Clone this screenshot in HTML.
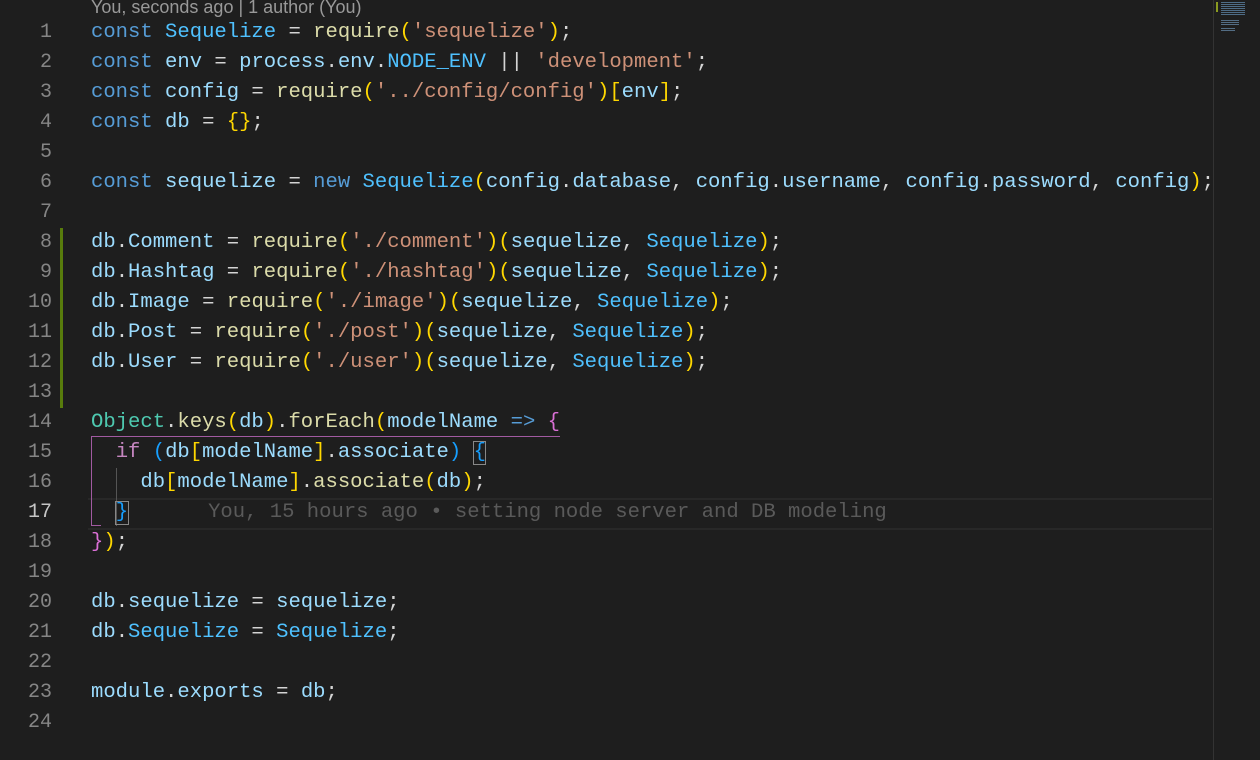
<!DOCTYPE html>
<html><head><meta charset="utf-8"><style>
body{margin:0;width:1260px;height:760px;background:#1e1e1e;overflow:hidden;position:relative;font-family:"Liberation Mono",monospace}
.lens{position:absolute;left:91px;top:-3px;font:18px "Liberation Sans",sans-serif;color:#999}
.ln{position:absolute;left:0;width:52px;text-align:right;font-size:20px;color:#858585;height:30px;line-height:30px}
.l{position:absolute;left:91px;font-size:20.57px;height:30px;line-height:30px;white-space:pre;color:#d4d4d4}
.k{color:#569cd6}.v{color:#9cdcfe}.c{color:#4fc1ff}.f{color:#dcdcaa}.s{color:#ce9178}.y{color:#ffd700}.p{color:#da70d6}.b{color:#179fff}.t{color:#4ec9b0}.i{color:#c586c0}.g{color:#5a5a5a}
</style></head><body>
<div class="lens">You, seconds ago | 1 author (You)</div>
<div style="position:absolute;left:60px;top:228px;width:3px;height:180px;background:#587c0c"></div>
<div style="position:absolute;left:88px;top:498px;width:1124px;height:28px;border-top:2px solid #282828;border-bottom:2px solid #282828"></div>
<div style="position:absolute;left:91px;top:436px;width:469px;height:1px;background:#a15aa1"></div>
<div style="position:absolute;left:91px;top:436px;width:1px;height:90px;background:#a15aa1"></div>
<div style="position:absolute;left:91px;top:525px;width:10px;height:1px;background:#a15aa1"></div>
<div style="position:absolute;left:116px;top:468px;width:1px;height:58px;background:#555"></div>
<div style="position:absolute;left:473px;top:441px;width:13px;height:24px;border:1px solid #888;box-sizing:border-box"></div>
<div style="position:absolute;left:115px;top:501px;width:14px;height:24px;border:1px solid #888;box-sizing:border-box"></div>
<div style="position:absolute;left:1213px;top:0;width:1px;height:760px;background:#333"></div>
<div style="position:absolute;left:1216px;top:2px;width:2px;height:10px;background:#8a9a20"></div>
<div style="position:absolute;left:1221px;top:2px;width:24px;height:14px;background:repeating-linear-gradient(#5a7fa0 0 1px,transparent 1px 2px);opacity:.8"></div>
<div style="position:absolute;left:1221px;top:20px;width:18px;height:6px;background:repeating-linear-gradient(#6a8fb0 0 1px,transparent 1px 2px);opacity:.7"></div>
<div style="position:absolute;left:1221px;top:28px;width:14px;height:4px;background:repeating-linear-gradient(#6a8fb0 0 1px,transparent 1px 2px);opacity:.7"></div>

<div class="ln" style="top:18px">1</div><div class="ln" style="top:48px">2</div><div class="ln" style="top:78px">3</div><div class="ln" style="top:108px">4</div><div class="ln" style="top:138px">5</div><div class="ln" style="top:168px">6</div><div class="ln" style="top:198px">7</div><div class="ln" style="top:228px">8</div><div class="ln" style="top:258px">9</div><div class="ln" style="top:288px">10</div><div class="ln" style="top:318px">11</div><div class="ln" style="top:348px">12</div><div class="ln" style="top:378px">13</div><div class="ln" style="top:408px">14</div><div class="ln" style="top:438px">15</div><div class="ln" style="top:468px">16</div><div class="ln" style="top:498px;color:#c6c6c6">17</div><div class="ln" style="top:528px">18</div><div class="ln" style="top:558px">19</div><div class="ln" style="top:588px">20</div><div class="ln" style="top:618px">21</div><div class="ln" style="top:648px">22</div><div class="ln" style="top:678px">23</div><div class="ln" style="top:708px">24</div>

<div class="l" style="top:18px"><span class="k">const</span> <span class="c">Sequelize</span> = <span class="f">require</span><span class="y">(</span><span class="s">'sequelize'</span><span class="y">)</span>;</div>
<div class="l" style="top:48px"><span class="k">const</span> <span class="v">env</span> = <span class="v">process</span>.<span class="v">env</span>.<span class="c">NODE_ENV</span> || <span class="s">'development'</span>;</div>
<div class="l" style="top:78px"><span class="k">const</span> <span class="v">config</span> = <span class="f">require</span><span class="y">(</span><span class="s">'../config/config'</span><span class="y">)[</span><span class="v">env</span><span class="y">]</span>;</div>
<div class="l" style="top:108px"><span class="k">const</span> <span class="v">db</span> = <span class="y">{}</span>;</div>
<div class="l" style="top:168px"><span class="k">const</span> <span class="v">sequelize</span> = <span class="k">new</span> <span class="c">Sequelize</span><span class="y">(</span><span class="v">config</span>.<span class="v">database</span>, <span class="v">config</span>.<span class="v">username</span>, <span class="v">config</span>.<span class="v">password</span>, <span class="v">config</span><span class="y">)</span>;</div>
<div class="l" style="top:228px"><span class="v">db</span>.<span class="v">Comment</span> = <span class="f">require</span><span class="y">(</span><span class="s">'./comment'</span><span class="y">)(</span><span class="v">sequelize</span>, <span class="c">Sequelize</span><span class="y">)</span>;</div>
<div class="l" style="top:258px"><span class="v">db</span>.<span class="v">Hashtag</span> = <span class="f">require</span><span class="y">(</span><span class="s">'./hashtag'</span><span class="y">)(</span><span class="v">sequelize</span>, <span class="c">Sequelize</span><span class="y">)</span>;</div>
<div class="l" style="top:288px"><span class="v">db</span>.<span class="v">Image</span> = <span class="f">require</span><span class="y">(</span><span class="s">'./image'</span><span class="y">)(</span><span class="v">sequelize</span>, <span class="c">Sequelize</span><span class="y">)</span>;</div>
<div class="l" style="top:318px"><span class="v">db</span>.<span class="v">Post</span> = <span class="f">require</span><span class="y">(</span><span class="s">'./post'</span><span class="y">)(</span><span class="v">sequelize</span>, <span class="c">Sequelize</span><span class="y">)</span>;</div>
<div class="l" style="top:348px"><span class="v">db</span>.<span class="v">User</span> = <span class="f">require</span><span class="y">(</span><span class="s">'./user'</span><span class="y">)(</span><span class="v">sequelize</span>, <span class="c">Sequelize</span><span class="y">)</span>;</div>
<div class="l" style="top:408px"><span class="t">Object</span>.<span class="f">keys</span><span class="y">(</span><span class="v">db</span><span class="y">)</span>.<span class="f">forEach</span><span class="y">(</span><span class="v">modelName</span> <span class="k">=&gt;</span> <span class="p">{</span></div>
<div class="l" style="top:438px">  <span class="i">if</span> <span class="b">(</span><span class="v">db</span><span class="y">[</span><span class="v">modelName</span><span class="y">]</span>.<span class="v">associate</span><span class="b">)</span> <span class="b">{</span></div>
<div class="l" style="top:468px">    <span class="v">db</span><span class="y">[</span><span class="v">modelName</span><span class="y">]</span>.<span class="f">associate</span><span class="y">(</span><span class="v">db</span><span class="y">)</span>;</div>
<div class="l" style="top:498px">  <span class="b">}</span>      <span class="g" style="padding-left:6px">You, 15 hours ago • setting node server and DB modeling</span></div>
<div class="l" style="top:528px"><span class="p">}</span><span class="y">)</span>;</div>
<div class="l" style="top:588px"><span class="v">db</span>.<span class="v">sequelize</span> = <span class="v">sequelize</span>;</div>
<div class="l" style="top:618px"><span class="v">db</span>.<span class="c">Sequelize</span> = <span class="c">Sequelize</span>;</div>
<div class="l" style="top:678px"><span class="v">module</span>.<span class="v">exports</span> = <span class="v">db</span>;</div>
</body></html>
